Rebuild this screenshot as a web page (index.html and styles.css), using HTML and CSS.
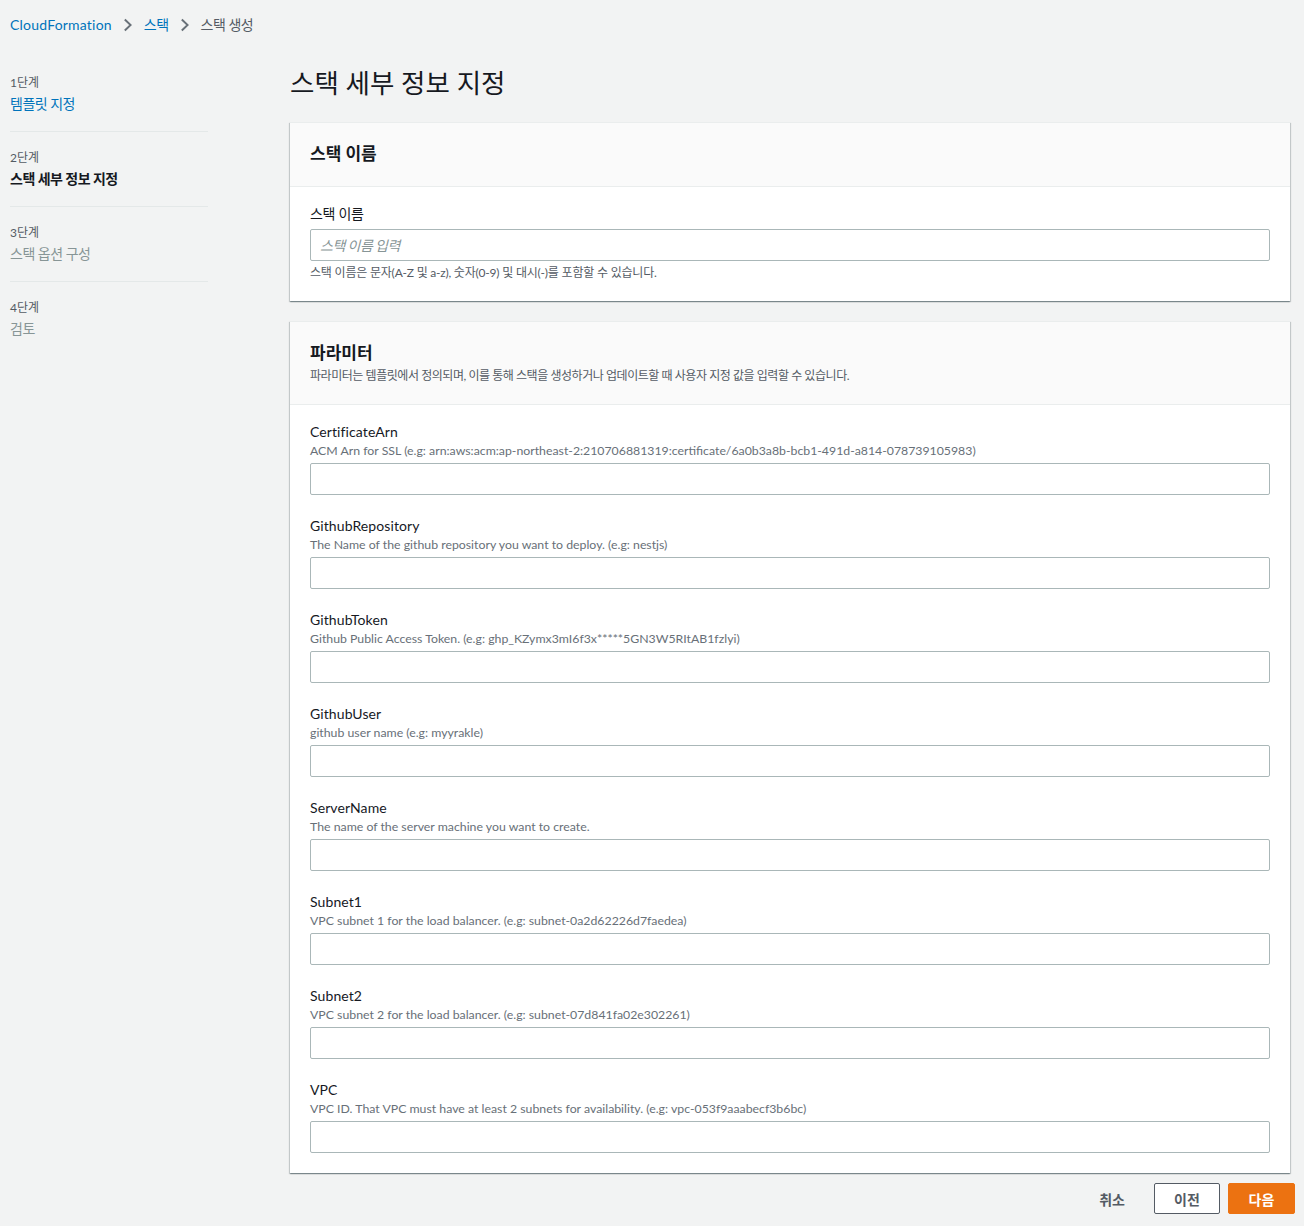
FILE: index.html
```html
<!DOCTYPE html>
<html lang="ko">
<head>
<meta charset="utf-8">
<title>스택 세부 정보 지정</title>
<link rel="stylesheet" href="styles.css">
</head>
<body>
<nav class="breadcrumbs">
  <a class="crumb-link crumb-latin" href="#">CloudFormation</a>
  <svg class="chev" viewBox="0 0 10 14" width="10" height="14"><path d="M1.8 1.5L7.6 7 1.8 12.5" fill="none" stroke="#687078" stroke-width="1.9"/></svg>
  <a class="crumb-link crumb-ko" href="#">스택</a>
  <svg class="chev" viewBox="0 0 10 14" width="10" height="14"><path d="M1.8 1.5L7.6 7 1.8 12.5" fill="none" stroke="#687078" stroke-width="1.9"/></svg>
  <span class="crumb-current crumb-ko">스택 생성</span>
</nav>

<div class="layout">
  <aside class="steps">
    <div class="step">
      <div class="step-num">1단계</div>
      <a class="step-name step-done" href="#">템플릿 지정</a>
    </div>
    <div class="step">
      <div class="step-num">2단계</div>
      <div class="step-name step-active">스택 세부 정보 지정</div>
    </div>
    <div class="step">
      <div class="step-num">3단계</div>
      <div class="step-name step-todo">스택 옵션 구성</div>
    </div>
    <div class="step step-last">
      <div class="step-num">4단계</div>
      <div class="step-name step-todo">검토</div>
    </div>
  </aside>

  <main class="main">
    <h1 class="page-title">스택 세부 정보 지정</h1>

    <section class="card">
      <header class="card-header">
        <h2 class="card-title">스택 이름</h2>
      </header>
      <div class="card-body">
        <div class="field">
          <label class="field-label">스택 이름</label>
          <input class="input" type="text" placeholder="스택 이름 입력">
          <div class="hint">스택 이름은 문자(A-Z 및 a-z), 숫자(0-9) 및 대시(-)를 포함할 수 있습니다.</div>
        </div>
      </div>
    </section>

    <section class="card">
      <header class="card-header card-header-desc">
        <h2 class="card-title">파라미터</h2>
        <p class="card-desc">파라미터는 템플릿에서 정의되며, 이를 통해 스택을 생성하거나 업데이트할 때 사용자 지정 값을 입력할 수 있습니다.</p>
      </header>
      <div class="card-body params">
        <div class="param">
          <label class="field-label">CertificateArn</label>
          <div class="param-desc">ACM Arn for SSL (e.g: arn:aws:acm:ap-northeast-2:210706881319:certificate/6a0b3a8b-bcb1-491d-a814-078739105983)</div>
          <input class="input" type="text">
        </div>
        <div class="param">
          <label class="field-label">GithubRepository</label>
          <div class="param-desc">The Name of the github repository you want to deploy. (e.g: nestjs)</div>
          <input class="input" type="text">
        </div>
        <div class="param">
          <label class="field-label">GithubToken</label>
          <div class="param-desc">Github Public Access Token. (e.g: ghp_KZymx3mI6f3x*****5GN3W5RItAB1fzlyi)</div>
          <input class="input" type="text">
        </div>
        <div class="param">
          <label class="field-label">GithubUser</label>
          <div class="param-desc">github user name (e.g: myyrakle)</div>
          <input class="input" type="text">
        </div>
        <div class="param">
          <label class="field-label">ServerName</label>
          <div class="param-desc">The name of the server machine you want to create.</div>
          <input class="input" type="text">
        </div>
        <div class="param">
          <label class="field-label">Subnet1</label>
          <div class="param-desc">VPC subnet 1 for the load balancer. (e.g: subnet-0a2d62226d7faedea)</div>
          <input class="input" type="text">
        </div>
        <div class="param">
          <label class="field-label">Subnet2</label>
          <div class="param-desc">VPC subnet 2 for the load balancer. (e.g: subnet-07d841fa02e302261)</div>
          <input class="input" type="text">
        </div>
        <div class="param">
          <label class="field-label">VPC</label>
          <div class="param-desc">VPC ID. That VPC must have at least 2 subnets for availability. (e.g: vpc-053f9aaabecf3b6bc)</div>
          <input class="input" type="text">
        </div>
      </div>
    </section>

    <div class="actions">
      <button class="btn btn-link" type="button">취소</button>
      <button class="btn btn-normal" type="button">이전</button>
      <button class="btn btn-primary" type="button">다음</button>
    </div>
  </main>
</div>
</body>
</html>
```

FILE: styles.css
```css
* { box-sizing: border-box; }

html, body {
  margin: 0;
  padding: 0;
  background: #f2f3f3;
}

body {
  font-family: "Lato", "Noto Sans CJK KR", sans-serif;
  color: #16191f;
  font-size: 14px;
  line-height: 20px;
}

a { text-decoration: none; }

.breadcrumbs {
  display: flex;
  align-items: center;
  gap: 11px;
  padding: 15px 10px 0 10px;
  height: 35px;
  font-size: 14px;
}

.crumb-link { color: #0073bb; }
.crumb-current { color: #545b64; }
.crumb-latin { letter-spacing: 0.2px; }
.crumb-ko { letter-spacing: -0.5px; }
.chev { display: block; }

.layout {
  display: grid;
  grid-template-columns: 198px 1000px;
  column-gap: 82px;
  padding: 30px 0 0 10px;
}

.steps {
  padding-top: 10px;
}

.step {
  padding: 0 0 17px 0;
  margin-bottom: 18px;
  border-bottom: 1px solid #e4e8e8;
  display: flex;
  flex-direction: column;
  gap: 3px;
}

.step-last { border-bottom: none; }

.step-num {
  font-size: 12px;
  line-height: 16px;
  color: #545b64;
}

.step-name {
  font-size: 14px;
  line-height: 20px;
  letter-spacing: -0.5px;
}

.step-done { color: #0073bb; }
.step-active { color: #16191f; font-weight: 700; }
.step-todo { color: #879596; }

.page-title {
  margin: 0 0 21px 0;
  font-size: 26.5px;
  line-height: 36px;
  font-weight: 400;
  color: #16191f;
}

.card {
  background: #ffffff;
  border-top: 1px solid #eaeded;
  box-shadow: 0 1px 1px 0 rgba(0, 28, 36, 0.3), 1px 1px 1px 0 rgba(0, 28, 36, 0.15), -1px 1px 1px 0 rgba(0, 28, 36, 0.15);
  margin-bottom: 20px;
}

.card-header {
  background: #fafafa;
  border-bottom: 1px solid #eaeded;
  padding: 20px 20px 21px 20px;
}

.card-header-desc {
  padding-bottom: 20px;
}

.card-title {
  margin: 0;
  font-size: 17px;
  line-height: 22px;
  font-weight: 700;
  color: #16191f;
}

.card-desc {
  margin: 4px 0 0 0;
  font-size: 12px;
  line-height: 16px;
  color: #545b64;
  letter-spacing: -0.45px;
}

.card-body {
  padding: 17px 20px 20px 20px;
}

.field {
  display: flex;
  flex-direction: column;
}

.field-label {
  font-size: 14px;
  line-height: 20px;
  color: #16191f;
  letter-spacing: 0.1px;
}

.field .field-label { margin-bottom: 5px; letter-spacing: -0.3px; }

.input {
  display: block;
  width: 100%;
  height: 32px;
  border: 1px solid #aab7b8;
  border-radius: 2px;
  background: #ffffff;
  padding: 4px 9px;
  font-family: "Lato", "Noto Sans CJK KR", sans-serif;
  font-size: 14px;
  color: #16191f;
  outline: none;
}

.input::placeholder {
  color: #879596;
  font-style: italic;
  letter-spacing: -0.5px;
}

.hint {
  margin-top: 4px;
  font-size: 12px;
  line-height: 16px;
  color: #545b64;
  letter-spacing: -0.2px;
}

.params {
  padding-top: 17px;
  display: flex;
  flex-direction: column;
  gap: 21px;
}

.param {
  display: flex;
  flex-direction: column;
}

.param .field-label { margin-bottom: 1px; }

.param-desc {
  font-size: 12.3px;
  line-height: 16px;
  color: #687078;
  margin-bottom: 4px;
}

.actions {
  display: flex;
  justify-content: flex-end;
  align-items: center;
  gap: 8px;
  margin: -10px -5px 0 0;
}

.btn {
  font-family: "Lato", "Noto Sans CJK KR", sans-serif;
  font-size: 14px;
  font-weight: 700;
  height: 31px;
  border-radius: 2px;
  cursor: pointer;
}

.btn-link {
  background: transparent;
  border: 1px solid transparent;
  color: #545b64;
  padding: 0 14px;
  margin-right: 6px;
}

.btn-normal {
  background: #ffffff;
  border: 1px solid #545b64;
  color: #545b64;
  width: 66px;
}

.btn-primary {
  background: #ec7211;
  border: 1px solid #ec7211;
  color: #ffffff;
  width: 67px;
}
```
